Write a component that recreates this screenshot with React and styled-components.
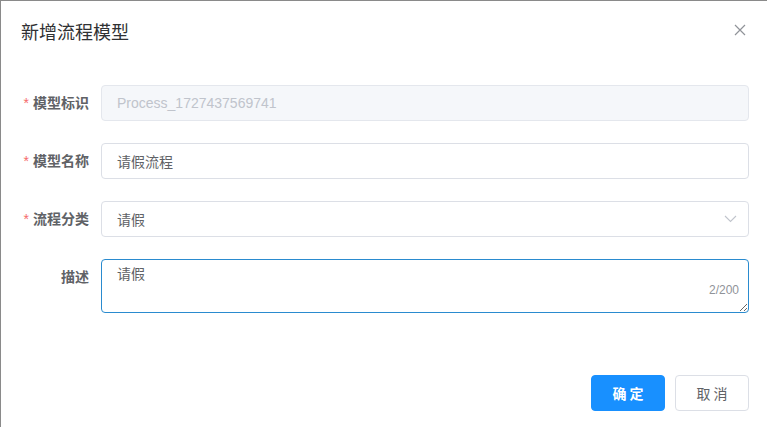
import React, { useState } from "react";
import styled, { createGlobalStyle } from "styled-components";

const GlobalStyle = createGlobalStyle`
  html, body {
    margin: 0;
    padding: 0;
    overflow: hidden;
    background: #fff;
  }
  body {
    font-family: "Liberation Sans", "Noto Sans CJK SC", sans-serif;
  }
`;

const Dialog = styled.div`
  width: 769px;
  box-sizing: border-box;
  background: #fff;
  border-top: 1px solid #8a8a8a;
  border-left: 1px solid #8a8a8a;
  position: relative;
`;

const Header = styled.div`
  padding: 20px 20px 10px;
  position: relative;
`;

const Title = styled.span`
  font-size: 18px;
  line-height: 24px;
  color: #303133;
`;

const CloseButton = styled.button`
  position: absolute;
  top: 21px;
  right: 21px;
  width: 16px;
  height: 16px;
  padding: 0;
  border: none;
  background: transparent;
  cursor: pointer;
  display: flex;
  align-items: center;
  justify-content: center;
  color: #909399;
`;

const Body = styled.div`
  padding: 30px 20px 30px;
`;

const FormItem = styled.div`
  display: flex;
  margin-bottom: 22px;
`;

const Label = styled.label`
  width: 80px;
  flex: none;
  box-sizing: border-box;
  padding-right: 12px;
  text-align: right;
  font-size: 14px;
  line-height: 36px;
  font-weight: 700;
  color: #606266;
`;

const Star = styled.span`
  color: #f56c6c;
  margin-right: 4px;
  font-weight: 400;
`;

const Control = styled.div`
  flex: 1;
  position: relative;
`;

const Input = styled.input`
  width: 100%;
  box-sizing: border-box;
  height: 36px;
  padding: 0 15px;
  font-size: 14px;
  font-family: inherit;
  color: ${(p) => (p.disabled ? "#c0c4cc" : "#606266")};
  background: ${(p) => (p.disabled ? "#f5f7fa" : "#fff")};
  border: 1px solid ${(p) => (p.disabled ? "#e4e7ed" : "#dcdfe6")};
  border-radius: 4px;
  outline: none;
  cursor: ${(p) => (p.readOnly ? "pointer" : "text")};
  &:disabled {
    -webkit-text-fill-color: #c0c4cc;
  }
`;

const Suffix = styled.span`
  position: absolute;
  right: 12px;
  top: 0;
  height: 36px;
  display: flex;
  align-items: center;
  color: #c0c4cc;
  pointer-events: none;
`;

const TextArea = styled.textarea`
  display: block;
  width: 100%;
  box-sizing: border-box;
  height: 54px;
  padding: 4px 15px;
  font-size: 14px;
  line-height: 1.5;
  font-family: inherit;
  color: #606266;
  border: 1px solid #2a8bcf;
  border-radius: 4px;
  outline: none;
  resize: vertical;
`;

const Count = styled.span`
  position: absolute;
  right: 10px;
  bottom: 17px;
  font-size: 12px;
  line-height: 1;
  color: #909399;
`;

const Footer = styled.div`
  padding: 10px 20px 20px;
  display: flex;
  justify-content: flex-end;
  gap: 10px;
`;

const Button = styled.button`
  width: 74px;
  height: 36px;
  box-sizing: border-box;
  border-radius: 4px;
  font-size: 14px;
  font-family: inherit;
  letter-spacing: 3px;
  padding: 0 0 0 3px;
  cursor: pointer;
  border: 1px solid ${(p) => (p.$primary ? "#1890ff" : "#dcdfe6")};
  background: ${(p) => (p.$primary ? "#1890ff" : "#fff")};
  color: ${(p) => (p.$primary ? "#fff" : "#606266")};
  font-weight: ${(p) => (p.$primary ? 700 : 400)};
`;

const CloseIcon = () => (
  <svg width="12" height="12" viewBox="0 0 12 12" fill="none">
    <path d="M1 1L11 11M11 1L1 11" stroke="currentColor" strokeWidth="1.2" />
  </svg>
);

const ChevronDown = () => (
  <svg width="13" height="8" viewBox="0 0 13 8" fill="none">
    <path d="M1 1L6.5 6.5L12 1" stroke="currentColor" strokeWidth="1.1" />
  </svg>
);

export default function App() {
  const [name, setName] = useState("请假流程");
  const [desc, setDesc] = useState("请假");

  return (
    <>
      <GlobalStyle />
      <Dialog>
        <Header>
          <Title>新增流程模型</Title>
          <CloseButton aria-label="关闭">
            <CloseIcon />
          </CloseButton>
        </Header>
        <Body>
          <FormItem>
            <Label>
              <Star>*</Star>模型标识
            </Label>
            <Control>
              <Input disabled value="Process_1727437569741" />
            </Control>
          </FormItem>
          <FormItem>
            <Label>
              <Star>*</Star>模型名称
            </Label>
            <Control>
              <Input value={name} onChange={(e) => setName(e.target.value)} />
            </Control>
          </FormItem>
          <FormItem>
            <Label>
              <Star>*</Star>流程分类
            </Label>
            <Control>
              <Input readOnly value="请假" />
              <Suffix>
                <ChevronDown />
              </Suffix>
            </Control>
          </FormItem>
          <FormItem>
            <Label>描述</Label>
            <Control>
              <TextArea
                maxLength={200}
                value={desc}
                onChange={(e) => setDesc(e.target.value)}
              />
              <Count>{desc.length}/200</Count>
            </Control>
          </FormItem>
        </Body>
        <Footer>
          <Button $primary>确定</Button>
          <Button>取消</Button>
        </Footer>
      </Dialog>
    </>
  );
}
